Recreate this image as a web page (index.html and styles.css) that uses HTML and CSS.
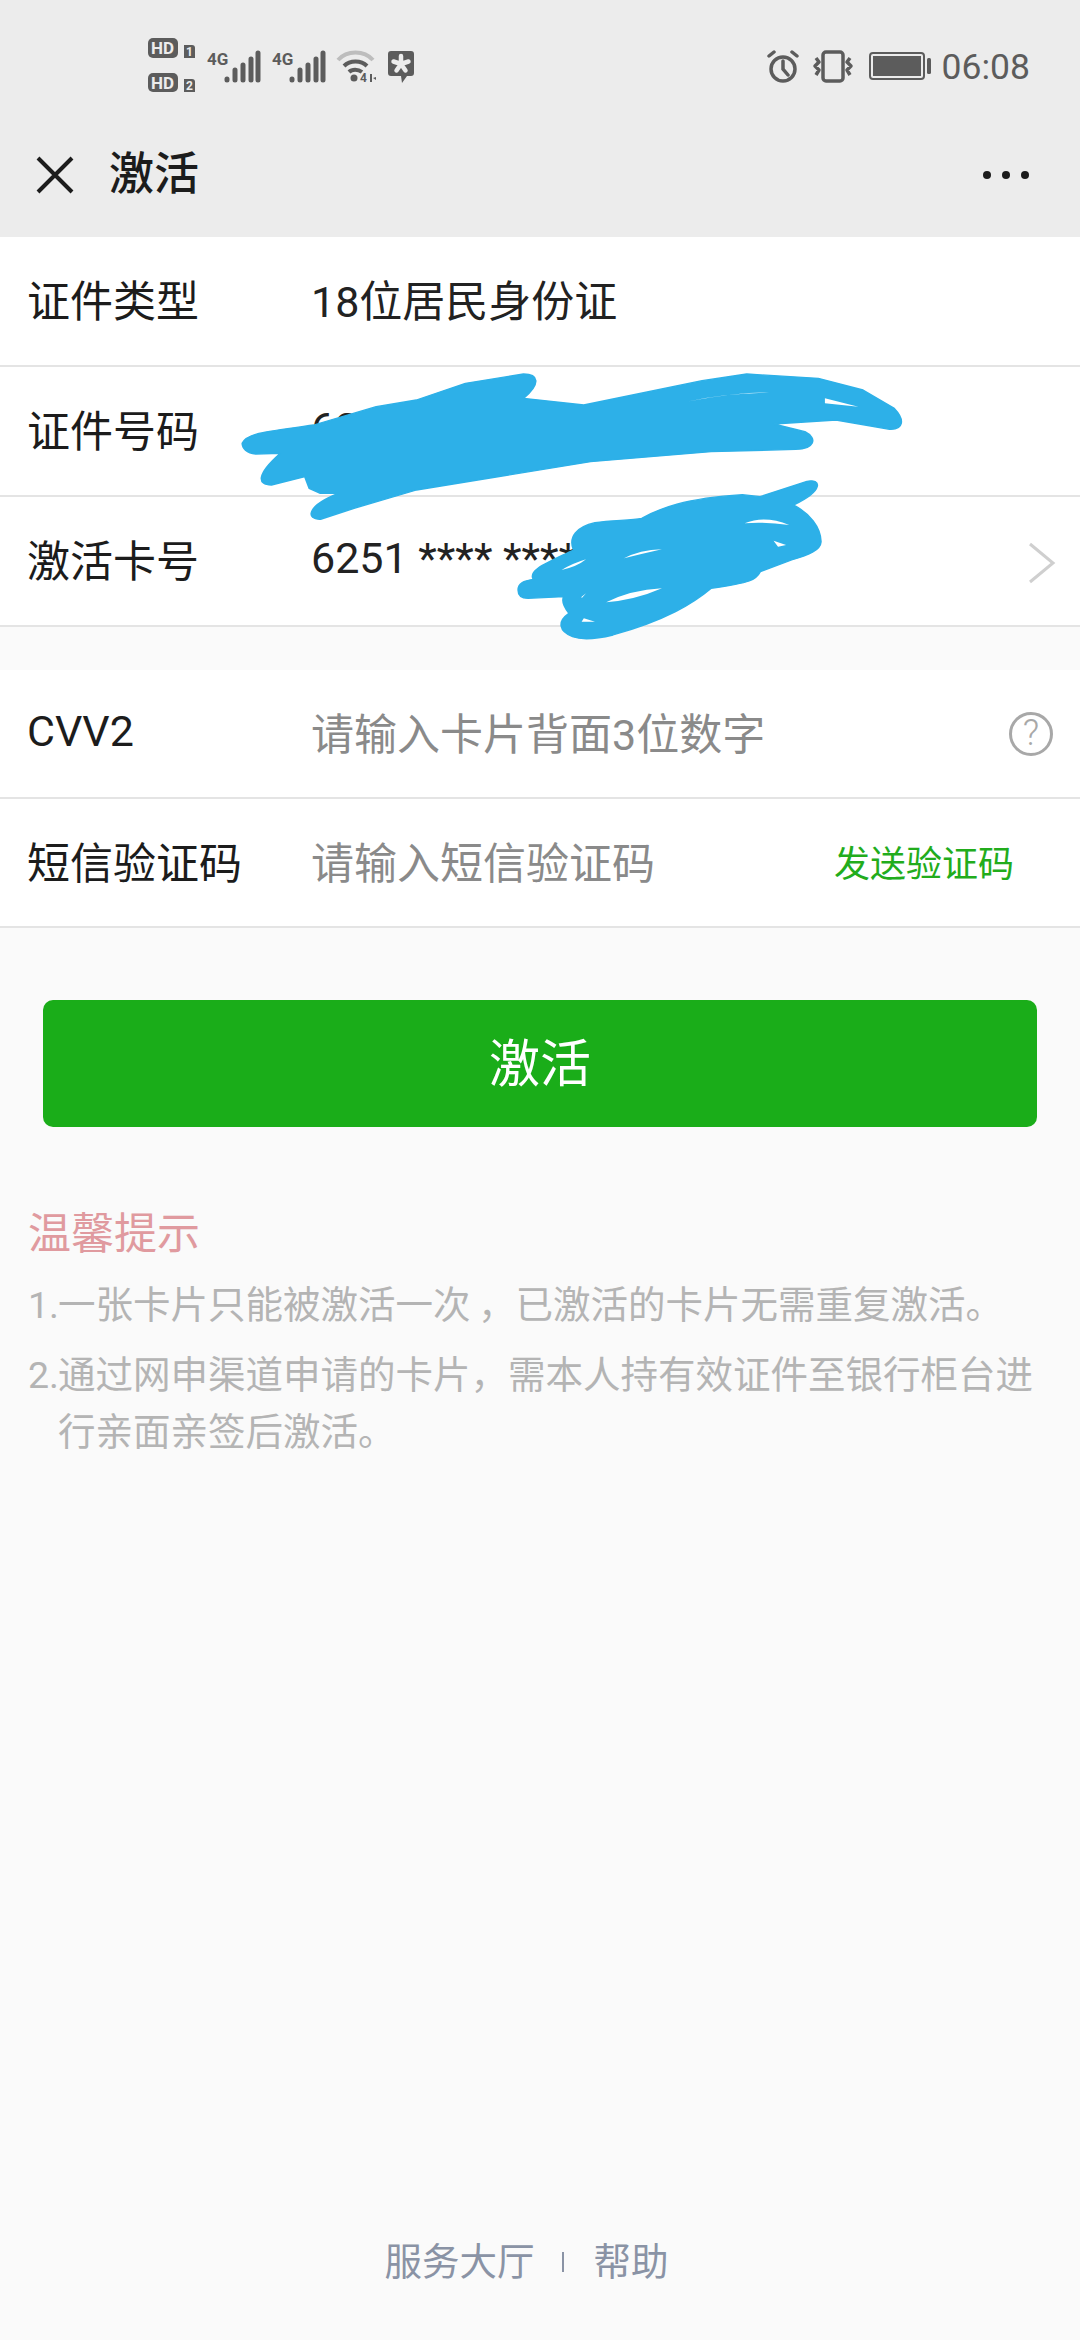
FILE: index.html
```html
<!DOCTYPE html>
<html lang="zh-CN">
<head>
<meta charset="utf-8">
<title>激活</title>
<link rel="stylesheet" href="styles.css">
</head>
<body>
<div class="page">
  <div class="topbar">
    <div class="status">
      <div class="status-left">
        <svg class="ic-hd" viewBox="0 0 48 54" width="48" height="54">
          <rect x="0" y="0" width="30" height="20" rx="5" class="dark"/>
          <text x="3" y="16" class="hd-t">HD</text>
          <path d="M36 7h8a3 3 0 0 1 3 3v10h-11z" class="dark"/>
          <text x="38" y="18" class="hd-n">1</text>
          <rect x="0" y="35" width="30" height="19" rx="5" class="dark"/>
          <text x="3" y="51" class="hd-t">HD</text>
          <path d="M36 41h8a3 3 0 0 1 3 3v10h-11z" class="dark"/>
          <text x="38" y="52" class="hd-n">2</text>
        </svg>
        <svg class="ic-sig" viewBox="0 -4 54 40" width="54" height="40">
          <text x="0" y="15" class="g4">4G</text>
          <g class="bars">
            <path d="M20 30v-1M28 30v-10M36 30v-15M44 30v-21M51 30v-27"/>
          </g>
        </svg>
        <svg class="ic-sig" viewBox="0 -4 54 40" width="54" height="40">
          <text x="0" y="15" class="g4">4G</text>
          <g class="bars">
            <path d="M20 30v-1M28 30v-10M36 30v-15M44 30v-21M51 30v-27"/>
          </g>
        </svg>
        <svg class="ic-wifi" viewBox="0 0 42 36" width="42" height="36">
          <path d="M3 12C12 2 29 2 38 12" class="arc-l"/>
          <path d="M9 18C15 12 26 12 32 18" class="arc-d"/>
          <path d="M14 24C17 21 23 21 27 24" class="arc-d"/>
          <circle cx="19" cy="30" r="3.500" class="dark"/>
          <text x="25" y="34" class="w4">4</text>
          <path d="M35 26l2 0v8h-2zM38 30l3-1v3z" class="dark"/>
        </svg>
        <svg class="ic-msg" viewBox="0 0 28 34" width="28" height="34">
          <path d="M4 1h20a3 3 0 0 1 3 3v19a3 3 0 0 1-3 3h-4l-5 7-1-7H4a3 3 0 0 1-3-3V4a3 3 0 0 1 3-3z" class="dark"/>
          <path d="M14 6v8M14 14l7.500-2.500M14 14l-7.500-2.500M14 14l4.500 6.500M14 14l-4.500 6.500" class="star"/>
        </svg>
      </div>
      <div class="status-right">
        <svg class="ic-alarm" viewBox="0 0 32 33" width="32" height="33">
          <circle cx="16" cy="19" r="12" class="ln"/>
          <path d="M16 11v8l5 6M2 6l5-4M30 6l-5-4" class="ln"/>
        </svg>
        <svg class="ic-vib" viewBox="0 0 42 33" width="42" height="33">
          <rect x="11" y="2" width="20" height="29" rx="3" class="ln"/>
          <path d="M4 8l3 4-4 4 4 4-3 5M38 8l-3 4 4 4-4 4 3 5" class="ln-t"/>
        </svg>
        <svg class="ic-bat" viewBox="0 0 62 28" width="62" height="28">
          <rect x="1" y="1" width="54" height="26" rx="3" class="bat-o"/>
          <rect x="4" y="4" width="48" height="20" class="dark"/>
          <rect x="58" y="6" width="4" height="16" rx="1.500" class="dark"/>
        </svg>
        <span class="clock">06:08</span>
      </div>
    </div>
    <div class="navbar">
      <svg class="ic-close" viewBox="0 0 38 38" width="38" height="38">
        <path d="M2 2L36 36M36 2L2 36"/>
      </svg>
      <span class="nav-title">激活</span>
      <span class="dots"><i></i><i></i><i></i></span>
    </div>
  </div>

  <div class="group">
    <div class="row"><span class="label">证件类型</span><span class="val">18位居民身份证</span></div>
    <div class="row"><span class="label">证件号码</span><span class="val">62</span></div>
    <div class="row"><span class="label">激活卡号</span><span class="val">6251 **** **** ****</span>
      <svg class="chev" viewBox="0 0 28 42" width="28" height="42"><path d="M2 2L25 21L2 40"/></svg>
    </div>
  </div>

  <div class="group group-b">
    <div class="row row-b"><span class="label">CVV2</span><span class="val ph">请输入卡片背面3位数字</span><span class="help">?</span></div>
    <div class="row row-b"><span class="label">短信验证码</span><span class="val ph">请输入短信验证码</span><span class="send">发送验证码</span></div>
  </div>

  <div class="btn">激活</div>

  <div class="tips">
    <div class="tips-title">温馨提示</div>
    <div class="tip"><span>1.</span><span>一张卡片只能被激活一次<span class="comma">，</span>已激活的卡片无需重复激活。</span></div>
    <div class="tip"><span>2.</span><span>通过网申渠道申请的卡片，需本人持有效证件至银行柜台进行亲面亲签后激活。</span></div>
  </div>

  <div class="foot"><span>服务大厅</span><i class="sep"></i><span>帮助</span></div>

  <svg class="scribble" viewBox="0 0 1568 900" width="700" height="300" preserveAspectRatio="none">
    <path class="sc" d="M50 280C60 250 100 245 210 225L350 170 440 150 550 100 680 72C712 72 720 100 680 145L815 165 1080 92 1180 72 1340 85 1440 120 1510 175C1535 210 1530 240 1500 238L1380 210 1240 222 1310 245C1340 265 1330 298 1290 298L1100 305 830 335 440 420 300 475 225 508C195 510 190 470 265 430L225 430 200 415 190 380 115 405C85 405 80 375 135 310L80 312C60 310 50 295 50 280Z"/>
    <path class="hole" d="M1045 155Q1130 130 1230 128Q1170 125 1045 155ZM1355 145L1430 170 1355 160Z"/>
    <path class="sc" d="M668 720C668 700 680 692 702 688C690 660 730 640 792 600C780 560 800 530 840 518C880 510 920 512 945 505C985 475 1040 445 1170 434L1210 440 1315 394C1345 385 1355 420 1285 465C1320 490 1345 530 1346 575C1345 600 1320 615 1280 630L1210 665C1200 690 1190 698 1100 715C1060 760 1000 810 880 855C840 868 810 870 790 860C760 845 755 815 782 790C770 770 765 755 770 740L690 745C675 745 668 735 668 720Z"/>
    <path class="hole" d="M765 660Q800 650 820 628 790 640 765 660ZM865 757Q930 750 990 715 920 720 865 757ZM1175 520Q1220 495 1275 525 1220 515 1175 520ZM1240 572L1268 585 1250 590ZM810 745L820 730 810 740ZM810 815L840 815 815 805ZM905 625Q950 610 990 598 940 600 905 625Z"/>
  </svg>
</div>
</body>
</html>
```
FILE: styles.css
```css
* { box-sizing: border-box; }
html, body { margin: 0; padding: 0; }
body { font-family: Roboto, "Noto Sans CJK SC", sans-serif; color: #1c1c1c; }
.page { position: relative; width: 1080px; height: 2340px; background: #fafafa; display: flex; flex-direction: column; overflow: hidden; }

.topbar { background: #ececec; height: 237px; flex: none; }
.status { height: 94px; padding: 40px 50px 0 148px; display: flex; justify-content: space-between; align-items: flex-start; }
.status-left, .status-right { display: flex; align-items: flex-start; }
.dark { fill: #5c5c5c; }
.hd-t { font: 700 17px Roboto, sans-serif; fill: #ececec; }
.hd-n { font: 700 12px Roboto, sans-serif; fill: #ececec; }
.ic-hd { margin-right: 11px; margin-top: -2px; }
.ic-sig { margin-top: 6px; }
.ic-sig + .ic-sig { margin-left: 11px; }
.g4 { font: 700 17px Roboto, sans-serif; fill: #5c5c5c; }
.bars path { fill: none; stroke: #5c5c5c; stroke-width: 5; stroke-linecap: round; }
.ic-wifi { margin-top: 8px; margin-left: 9px; }
.arc-l { fill: none; stroke: #bdbdbd; stroke-width: 4; }
.arc-d { fill: none; stroke: #5c5c5c; stroke-width: 4; }
.w4 { font: 700 12px Roboto, sans-serif; fill: #5c5c5c; }
.ic-msg { margin-top: 10px; margin-left: 10px; }
.star { fill: none; stroke: #ececec; stroke-width: 4.500; stroke-linecap: round; }
.status-right { padding-top: 10px; }
.ln { fill: none; stroke: #5c5c5c; stroke-width: 3.500; stroke-linecap: round; }
.ln-t { fill: none; stroke: #5c5c5c; stroke-width: 3.500; stroke-linejoin: round; }
.ic-alarm { margin-right: 13px; }
.ic-vib { margin-right: 15px; }
.ic-bat { margin-top: 2px; margin-right: 11px; }
.bat-o { fill: none; stroke: #5c5c5c; stroke-width: 2; }
.clock { font-size: 35.500px; line-height: 35px; color: #5c5c5c; }

.navbar { height: 143px; padding: 18px 51px 0 36px; display: flex; align-items: center; }
.ic-close path { fill: none; stroke: #1c1c1c; stroke-width: 4; }
.nav-title { margin-left: 35px; font-size: 45px; font-weight: 500; line-height: 60px; color: #1c1c1c; }
.dots { margin-left: auto; display: flex; gap: 11px; }
.dots i { width: 8px; height: 8px; border-radius: 50%; background: #1c1c1c; }

.group { background: #fff; flex: none; }
.group-b { margin-top: 43px; }
.row { height: 130px; border-bottom: 2px solid #e4e4e4; padding: 0 27px 0 27px; display: flex; align-items: center; }
.row-b { height: 129px; }
.label { width: 284px; flex: none; font-size: 43px; margin-bottom: 6px; }
.val { font-size: 43px; color: #222; margin-bottom: 6px; white-space: nowrap; }
.ph { color: #8a8a8a; }
.chev { margin-left: auto; margin-right: -3px; margin-top: 4px; }
.chev path { fill: none; stroke: #cfcfcf; stroke-width: 3; }
.help { margin-left: auto; width: 44px; height: 44px; border: 3.500px solid #a8a8a8; border-radius: 50%; color: #a8a8a8; font-size: 36px; font-weight: 300; line-height: 37px; text-align: center; }
.send { margin-left: auto; margin-right: 39px; margin-bottom: 3px; font-size: 36px; color: #22ac1c; }

.btn { margin: 72px 43px 0; height: 127px; flex: none; background: #1aad19; border-radius: 10px; color: #fff; font-size: 51px; padding-bottom: 8px; display: flex; align-items: center; justify-content: center; }

.tips { margin-top: 79px; padding: 0 28px; flex: none; }
.tips-title { font-size: 43px; line-height: 57px; color: #e09a9f; margin-bottom: 14px; }
.tip { display: flex; font-size: 37.500px; line-height: 57px; color: #b4b4b4; margin-bottom: 13px; }
.tip > span:first-child { width: 30px; flex: none; }
.comma { margin-left: 0.2em; }

.foot { margin-top: auto; padding-bottom: 50px; display: flex; align-items: center; justify-content: center; font-size: 37.500px; line-height: 56px; color: #8a93a5; padding-right: 27px; }
.sep { width: 2px; height: 20px; background: #8a93a5; margin: 0 30px 0 27px; }

.scribble { position: absolute; left: 220px; top: 350px; }
.sc { fill: #2db0e8; stroke: #2db0e8; stroke-width: 4; stroke-linejoin: round; }
.hole { fill: #fff; }
```
